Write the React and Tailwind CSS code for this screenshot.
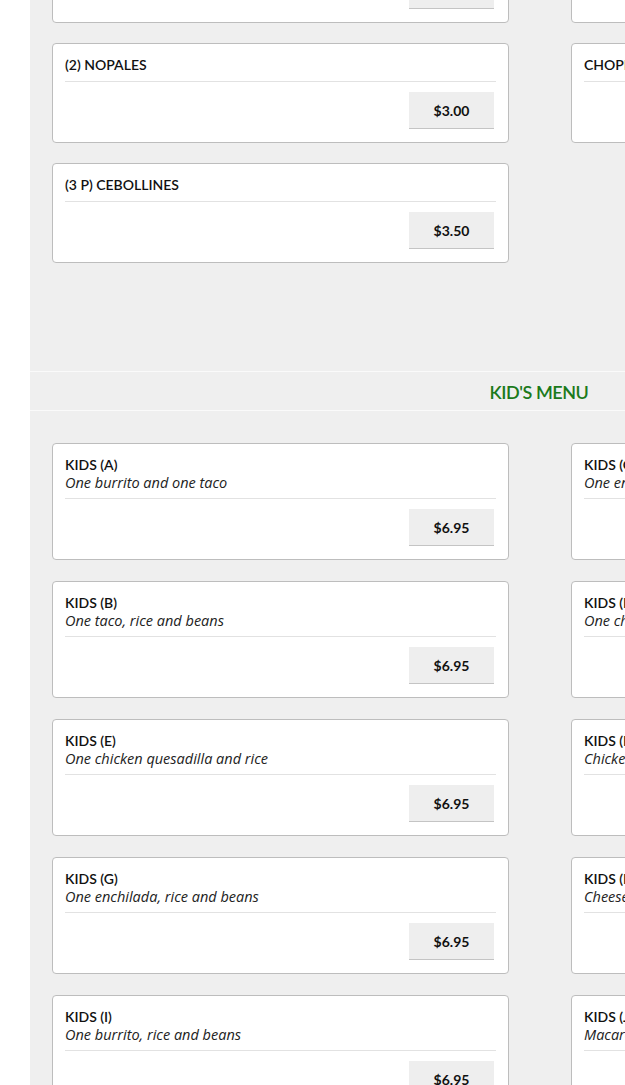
import React from 'react';

const topItems = [
  { name: '(1) RAJAS', price: '$2.50' },
  { name: 'CHILES TOREADOS', price: '$2.50' },
  { name: '(2) NOPALES', price: '$3.00' },
  { name: 'CHOPPED JALAPEÑOS', price: '$1.50' },
  { name: '(3 P) CEBOLLINES', price: '$3.50' },
];

const kidsItems = [
  { name: 'KIDS (A)', desc: 'One burrito and one taco', price: '$6.95' },
  { name: 'KIDS (C)', desc: 'One enchilada and one taco', price: '$6.95' },
  { name: 'KIDS (B)', desc: 'One taco, rice and beans', price: '$6.95' },
  { name: 'KIDS (D)', desc: 'One cheese quesadilla and rice', price: '$6.95' },
  { name: 'KIDS (E)', desc: 'One chicken quesadilla and rice', price: '$6.95' },
  { name: 'KIDS (F)', desc: 'Chicken nuggets and french fries', price: '$6.95' },
  { name: 'KIDS (G)', desc: 'One enchilada, rice and beans', price: '$6.95' },
  { name: 'KIDS (H)', desc: 'Cheeseburger and french fries', price: '$6.95' },
  { name: 'KIDS (I)', desc: 'One burrito, rice and beans', price: '$6.95' },
  { name: 'KIDS (J)', desc: 'Macaroni and cheese', price: '$6.95' },
];

function MenuCard({ item }) {
  return (
    <div className="bg-white border border-[#bdbdbd] rounded-[4px] px-3 pt-3 pb-[13px]">
      <div className={item.desc ? 'mb-[6px]' : 'mb-[7px]'}>
        <div className="text-[14px] leading-[18px] font-semibold text-[#111]">{item.name}</div>
        {item.desc && (
          <div
            className="text-[14.5px] leading-[18px] italic text-[#222]"
            style={{ fontFamily: '"Open Sans", sans-serif' }}
          >
            {item.desc}
          </div>
        )}
      </div>
      <div className="h-px bg-[#e2e2e2]" />
      <div className="flex justify-end mt-[10px] mr-[2px]">
        <button className="w-[85px] h-[37px] bg-[#eeeeee] border-b border-[#c4c4c4] text-[14px] font-bold text-[#111]">
          {item.price}
        </button>
      </div>
    </div>
  );
}

export default function App() {
  return (
    <div className="w-full h-[1085px] overflow-hidden bg-white" style={{ fontFamily: 'Lato, "Open Sans", sans-serif' }}>
      <div className="w-[1018px] ml-[30px] bg-[#efefef] -mt-[77px] pb-10">
        <div className="grid grid-cols-[457px_457px] gap-x-[62px] gap-y-5 pl-[22px]">
          {topItems.map((item) => (
            <MenuCard key={item.name} item={item} />
          ))}
        </div>

        <div className="mt-[108px] h-[40px] border-y border-[#fafafa] flex items-center justify-center pt-[3px]">
          <h2 className="text-[18px] font-semibold text-[#1b7a1b] tracking-tight">KID'S MENU</h2>
        </div>

        <div className="grid grid-cols-[457px_457px] gap-x-[62px] gap-y-[21px] pl-[22px] mt-[32px]">
          {kidsItems.map((item) => (
            <MenuCard key={item.name} item={item} />
          ))}
        </div>
      </div>
    </div>
  );
}
